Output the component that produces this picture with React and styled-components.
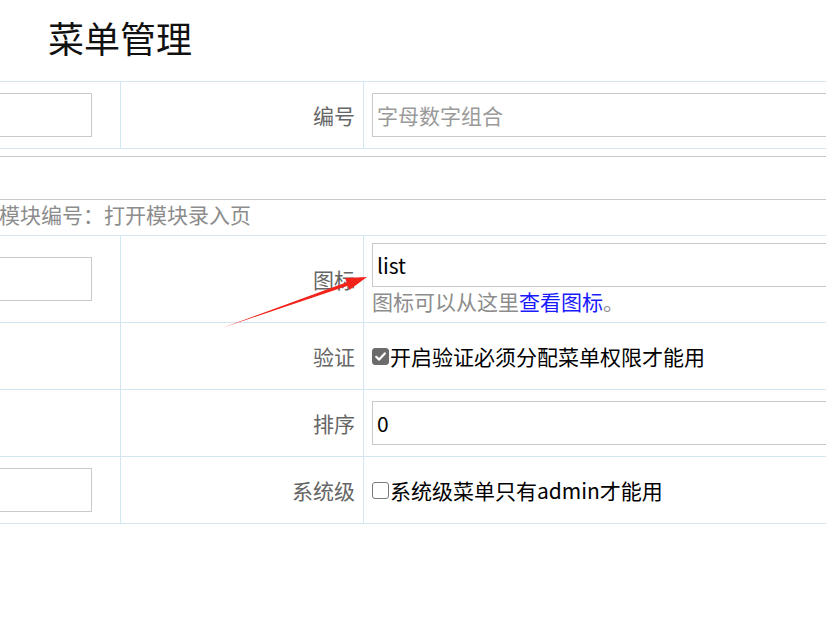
import styled, { createGlobalStyle } from "styled-components";

const GlobalStyle = createGlobalStyle`
  html, body {
    margin: 0;
    padding: 0;
    background: #fff;
    overflow: hidden;
  }
  body {
    font-family: "Noto Sans CJK SC", "Noto Sans", sans-serif;
  }
`;

const LINE = "#d3e7f3";

const Page = styled.div`
  position: relative;
  width: 826px;
  height: 626px;
  overflow: hidden;
`;

const Title = styled.h1`
  margin: 0;
  padding: 17px 0 24px 48px;
  font-size: 36px;
  line-height: 40px;
  font-weight: 400;
  color: #111;
`;

const Form = styled.div`
  margin-left: -10px;
  width: 920px;
  border-top: 1px solid ${LINE};
`;

const Row = styled.div`
  display: grid;
  grid-template-columns: 130px 243px 1fr;
  min-height: 66px;
  border-bottom: 1px solid ${LINE};
`;

const FieldCell = styled.div`
  display: flex;
  align-items: center;
  padding: 11px 28px 11px 9px;
`;

const LabelCell = styled.div`
  display: flex;
  align-items: center;
  justify-content: flex-end;
  padding-right: 8px;
  border-left: 1px solid ${LINE};
  font-size: 21px;
  color: #666;
`;

const ValueCell = styled.div`
  display: flex;
  flex-direction: column;
  justify-content: center;
  padding: ${(p) => (p.$tight ? "7px 8px" : "11px 8px")};
  border-left: 1px solid ${LINE};
`;

const WideCell = styled.div`
  grid-column: 1 / -1;
  padding: 7px 9px;
`;

const TextInput = styled.input`
  box-sizing: border-box;
  width: 100%;
  height: 44px;
  margin: 0;
  padding: 0 4px;
  border: 1px solid #c9c9c9;
  border-radius: 0;
  outline: none;
  font-family: inherit;
  font-size: 21px;
  color: #000;
  background: #fff;

  &::placeholder {
    color: #9a9a9a;
  }
`;

const Hint = styled.div`
  font-size: 21px;
  line-height: 28px;
  color: #8c8c8c;
  white-space: nowrap;
`;

const Link = styled.a`
  color: #1a1aff;
  text-decoration: none;
`;

const CheckLine = styled.label`
  display: flex;
  align-items: center;
  font-size: 21px;
  color: #000;
  white-space: nowrap;
`;

const Box = styled.span`
  box-sizing: border-box;
  flex: 0 0 17px;
  width: 17px;
  height: 17px;
  margin-right: 1px;
  border-radius: 3px;
  display: inline-flex;
  align-items: center;
  justify-content: center;
  background: ${(p) => (p.$checked ? "#6b6b6b" : "#fff")};
  border: 1px solid ${(p) => (p.$checked ? "#6b6b6b" : "#7a7a7a")};
`;

const Overlay = styled.svg`
  position: absolute;
  left: 0;
  top: 0;
  pointer-events: none;
`;

const Checkbox = ({ checked }) => (
  <Box $checked={checked}>
    {checked && (
      <svg width="13" height="13" viewBox="0 0 13 13">
        <path d="M2.2 6.8 L5.2 9.6 L10.8 3.4" fill="none" stroke="#fff" strokeWidth="2.2" strokeLinecap="round" strokeLinejoin="round" />
      </svg>
    )}
  </Box>
);

const App = () => {
  return (
    <Page>
      <GlobalStyle />
      <Title>菜单管理</Title>
      <Form>
        <Row>
          <FieldCell>
            <TextInput defaultValue="" />
          </FieldCell>
          <LabelCell>编号</LabelCell>
          <ValueCell>
            <TextInput placeholder="字母数字组合" />
          </ValueCell>
        </Row>
        <Row>
          <WideCell>
            <TextInput defaultValue="" />
            <Hint>模块编号：打开模块录入页</Hint>
          </WideCell>
        </Row>
        <Row>
          <FieldCell>
            <TextInput defaultValue="" />
          </FieldCell>
          <LabelCell>图标</LabelCell>
          <ValueCell $tight>
            <TextInput defaultValue="list" />
            <Hint>
              图标可以从这里<Link>查看图标</Link>。
            </Hint>
          </ValueCell>
        </Row>
        <Row>
          <FieldCell />
          <LabelCell>验证</LabelCell>
          <ValueCell>
            <CheckLine>
              <Checkbox checked />
              开启验证必须分配菜单权限才能用
            </CheckLine>
          </ValueCell>
        </Row>
        <Row>
          <FieldCell />
          <LabelCell>排序</LabelCell>
          <ValueCell>
            <TextInput defaultValue="0" />
          </ValueCell>
        </Row>
        <Row>
          <FieldCell>
            <TextInput defaultValue="" />
          </FieldCell>
          <LabelCell>系统级</LabelCell>
          <ValueCell>
            <CheckLine>
              <Checkbox />
              系统级菜单只有admin才能用
            </CheckLine>
          </ValueCell>
        </Row>
      </Form>
      <Overlay width="826" height="626" viewBox="0 0 826 626">
        <polygon
          points="222,328 346.6,282.3 345,277.9 367,277 349.4,290.1 347.8,285.7"
          fill="#f2231b"
        />
      </Overlay>
    </Page>
  );
};

export default App;
